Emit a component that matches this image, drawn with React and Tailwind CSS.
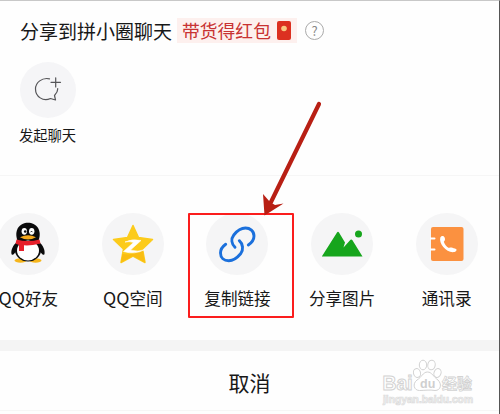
import React from 'react';

const QQIcon = () => (
  <svg width="36" height="42" viewBox="0 0 36 42" className="shrink-0">
    <path d="M7 20 C3 23 .8 28 1.500 32 C2.500 34.500 5 31 6 29 M29 20 C33 23 35.200 28 34.500 32 C33.500 34.500 31 31 30 29" fill="#0b0b0c" />
    <ellipse cx="10.500" cy="38.500" rx="6" ry="2.200" fill="#f5b51c" />
    <ellipse cx="25.500" cy="38.500" rx="6" ry="2.200" fill="#f5b51c" />
    <ellipse cx="18" cy="27.500" rx="13.200" ry="12" fill="#0b0b0c" />
    <path d="M7.500 19 C3.500 7.500 10 .8 18 .8 C26 .8 32.500 7.500 28.500 19 Z" fill="#0b0b0c" />
    <ellipse cx="18" cy="28.500" rx="11" ry="10" fill="#fff" />
    <path d="M6.500 17.500 Q18 20.500 29.500 17.500 L30.500 21.500 Q20 24 14 23.300 V29 H9 V23 L5.500 21.500 Z" fill="#e6202b" />
    <ellipse cx="14.300" cy="9.300" rx="2.700" ry="3.400" fill="#fff" />
    <ellipse cx="21.700" cy="9.300" rx="2.700" ry="3.400" fill="#fff" />
    <circle cx="15.200" cy="9.500" r="1.300" fill="#111" />
    <path d="M20.600 10.200 q.9 -2 1.900 0" fill="none" stroke="#111" strokeWidth="1" />
    <path d="M10 15.200 Q18 11.500 26 15.200 Q18 20 10 15.200Z" fill="#f5a91c" />
  </svg>
);

const QzoneIcon = () => (
  <svg width="42" height="40" viewBox="0 0 42 40" className="shrink-0">
    <path d="M21 1.500 L26.500 13.500 L40.500 15.500 L30.500 25 L33 38.500 L21 32 L9 38.500 L11.500 25 L1.500 15.500 L15.500 13.500 Z" fill="#fccb1b" stroke="#fccb1b" strokeWidth="1.500" strokeLinejoin="round" />
    <path d="M30.500 25 L33 38.500 L21 32 L9 38.500 L10.500 30 Q22 32 30.500 25Z" fill="#f9bd12" />
    <path d="M13 18 Q20 14.500 29 16.500 L18.500 26 Q26 28.500 33 25.500 Q23 31 11.500 27.500 L21.500 18.500 Q17 17 13 18 Z" fill="#fff" stroke="#fff" strokeWidth=".6" strokeLinejoin="round" />
  </svg>
);

const LinkIcon = () => (
  <svg width="38" height="38" viewBox="0 0 38 38" fill="none" stroke="#1b70dc" strokeWidth="2.900" strokeLinecap="round" className="shrink-0">
    <path d="M30.300 20 C33 18.200 36 15 36 11 C36 6 32 3 27.500 3 C23 3 18.500 6.500 15.800 10 C12.800 14 13.500 18.800 17 22.300" />
    <path d="M7.700 19.300 C5 21.200 2.500 24.500 2.500 28 C2.500 32.800 6 35.800 10.800 35.800 C15.500 35.800 19.500 32.500 22.600 28.800 C25.800 24.800 25 19 21.300 15.700" />
  </svg>
);

const PictureIcon = () => (
  <svg width="42" height="28" viewBox="0 0 42 28" fill="#16a51c" className="shrink-0">
    <path d="M.8 26.500 L16 2.500 Q17 1.200 18 2.500 L24 12.500 L22.500 17.500 L29.500 9.800 Q30.500 8.900 31.300 10 L41.500 26.500 Z" />
    <circle cx="37.500" cy="4" r="3.500" />
  </svg>
);

const ContactsIcon = () => (
  <svg width="34" height="36" viewBox="0 0 34 36" className="shrink-0">
    <rect x="1" y="1" width="32.500" height="34" rx="2" fill="#fb9140" />
    <path d="M0 12.500 H4.500 M0 23.500 H4.500" stroke="#fff" strokeWidth="2" strokeLinecap="round" />
    <path d="M10.300 11.500 C11 9.500 13.500 9.300 14.500 11.200 C15.300 13 15.200 14.600 13.800 15.700 C14.800 18.800 16.500 20.700 19 22 C20.500 21 22 21.700 25 22.600 C27.700 23.500 26.500 25.500 24.500 26 C17 27.500 8.500 18 10.300 11.500Z" fill="#fff" />
  </svg>
);

const ChatAddIcon = () => (
  <svg width="28" height="26" viewBox="0 0 28 26" fill="none" stroke="#555558" strokeWidth="1.200" strokeLinecap="round" strokeLinejoin="round" className="shrink-0">
    <path d="M15.500 1.800 C8 .2 1.500 5.500 1.500 12 C1.500 19.500 9 25 16.500 21.500 L21.500 23 L20.500 18.500 C22.500 16.500 23.900 14 23.700 11.500" />
    <path d="M17 5.300 H26.500 M21.700 .8 V10" />
  </svg>
);

const targets = [
  { prefix: 'QQ', label: '好友', icon: <QQIcon />, nudge: 'pb-0.5' },
  { prefix: 'QQ', label: '空间', icon: <QzoneIcon />, nudge: '' },
  { label: '复制链接', icon: <LinkIcon />, nudge: '' },
  { label: '分享图片', icon: <PictureIcon />, nudge: '' },
  { label: '通讯录', icon: <ContactsIcon />, nudge: '' },
];

const Watermark = () => (
  <svg width="96" height="52" viewBox="0 0 96 52" className="absolute left-[381px] top-[357px]" fontFamily="'Liberation Sans', 'Noto Sans CJK SC', sans-serif">
    <g fill="#fff" stroke="#d2d2d2" strokeWidth="1">
      <ellipse cx="36" cy="15" rx="3.500" ry="4.500" transform="rotate(-15 36 15)" />
      <ellipse cx="42" cy="7" rx="3.700" ry="4.800" />
      <ellipse cx="50.500" cy="7" rx="3.700" ry="4.800" transform="rotate(10 50.500 7)" />
      <ellipse cx="56.500" cy="15" rx="3.500" ry="4.500" transform="rotate(20 56.500 15)" />
      <path d="M46.500 14 C42 14 40.500 19.500 36 22 C31 26 33 32.500 38.500 32.500 C43 32.500 49 31.500 54 32.500 C60 32.500 61 26 57 22 C52.500 19 51 14 46.500 14Z" />
      <text x="1.500" y="31.500" fontSize="20" fontWeight="700" textLength="30" lengthAdjust="spacingAndGlyphs">Bai</text>
      <text x="61" y="30.500" fontSize="15" fontWeight="700" strokeWidth=".8">经验</text>
    </g>
    <text x="39" y="29.500" fontSize="12.500" fontWeight="700" fill="#cfcfcf">du</text>
    <text x="2" y="44.500" fontSize="10" fontWeight="700" fill="#f4f4f4" stroke="#dcdcdc" strokeWidth=".7" textLength="90" lengthAdjust="spacingAndGlyphs">jingyan.baidu.com</text>
  </svg>
);

export default function App() {
  return (
    <div className="relative w-[500px] h-[414px] overflow-hidden flex flex-col bg-[#fefefe] border-t border-t-[#c8c8c8] border-r border-r-[#555] text-[#181818] font-['Noto_Sans_CJK_SC',sans-serif]">
      {/* 聊天分享 */}
      <section className="h-[175px] shrink-0 border-b border-[#f6f6f6] pt-[17px] pl-5">
        <div className="flex items-center h-[25px] whitespace-nowrap">
          <h2 className="text-[19px] leading-[25px] w-[157px]">分享到拼小圈聊天</h2>
          <div className="flex items-center h-[25px] w-[120px] pl-[5px] bg-[#fdf0ee] text-[#c83232]">
            <span className="text-[17.8px] leading-[25px] w-[95px]">带货得红包</span>
            <svg width="14" height="19" viewBox="0 0 14 19">
              <rect width="14" height="19" rx="2" fill="#dc3020" />
              <circle cx="7" cy="7.500" r="2.800" fill="#f8c880" />
            </svg>
          </div>
          <span className="ml-2 w-[19px] h-[19px] rounded-full border border-[#aaa] text-[#888] text-[13px] leading-[17px] text-center">?</span>
        </div>
        <div className="mt-[19px] w-[56px] flex flex-col items-center">
          <div className="w-[56px] h-[56px] rounded-full bg-[#f5f5f7] flex items-center justify-center">
            <ChatAddIcon />
          </div>
          <span className="mt-[7px] -ml-px text-[14.300px] leading-5 whitespace-nowrap">发起聊天</span>
        </div>
      </section>

      {/* 分享渠道 */}
      <section className="h-[164px] shrink-0 pt-[37px]">
        <div className="flex -ml-[24px] w-[523px]">
          {targets.map((t) => (
            <div key={t.label} className="w-[104.600px] shrink-0 flex flex-col items-center">
              <div className={`w-[62px] h-[62px] rounded-full bg-[#f5f5f6] flex items-center justify-center ${t.nudge}`}>
                {t.icon}
              </div>
              <span className="mt-[11px] text-[16.600px] leading-6 whitespace-nowrap">
                {t.prefix && <span className="text-[17.800px] leading-none">{t.prefix}</span>}
                {t.label}
              </span>
            </div>
          ))}
        </div>
      </section>

      <div className="h-[11px] shrink-0 bg-[#f4f4f4]" />
      <button className="h-[60px] shrink-0 border-b border-[#f6f6f6] pt-[3px] text-[21px] leading-[56px] text-center">取消</button>

      {/* 标注框和箭头 */}
      <div className="absolute left-[188px] top-[212px] w-[106px] h-[105px] border-2 border-[#fb1d1d] rounded-[1px]" />
      <svg width="64" height="118" viewBox="0 0 64 118" className="absolute left-[260px] top-[98px]">
        <path d="M59 5 L11 103" stroke="#b81f14" strokeWidth="4.200" strokeLinecap="round" />
        <path d="M4.500 116.500 L3 95 L10 103 L15 106 L23.500 104.500 Z" fill="#b81f14" />
      </svg>
      <Watermark />
    </div>
  );
}
